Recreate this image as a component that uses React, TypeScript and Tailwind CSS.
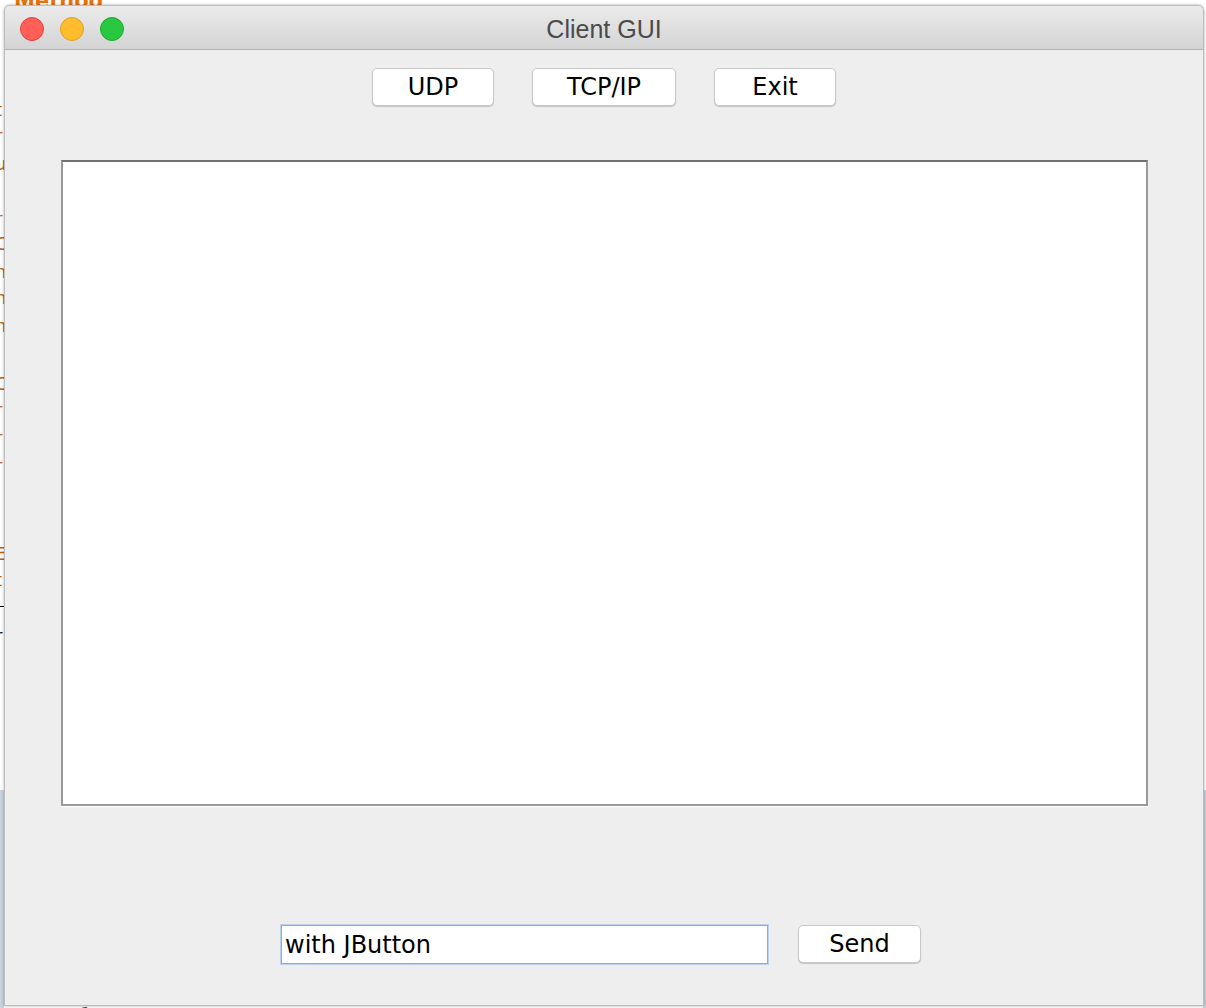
import React from "react"

const behindLines = [
  { top: 96, ch: "t", c: "text-[#c65d07]" },
  { top: 122, ch: "r", c: "text-[#c65d07]" },
  { top: 150, ch: "u", c: "text-[#c65d07]" },
  { top: 205, ch: "r", c: "text-[#c65d07]" },
  { top: 230, ch: "C", c: "text-[#c65d07]" },
  { top: 258, ch: "n", c: "text-[#c65d07]" },
  { top: 284, ch: "n", c: "text-[#c65d07]" },
  { top: 312, ch: "n", c: "text-[#c65d07]" },
  { top: 370, ch: "C", c: "text-[#c65d07]" },
  { top: 396, ch: "r", c: "text-[#c65d07]" },
  { top: 424, ch: "r", c: "text-[#c65d07]" },
  { top: 452, ch: "r", c: "text-[#c65d07]" },
  { top: 540, ch: "E", c: "text-[#c65d07]" },
  { top: 566, ch: "t", c: "text-[#c65d07]" },
  { top: 622, ch: "r", c: "text-black" },
]

function MacButton({ label, w }: { label: string; w: string }) {
  return (
    <button
      className={`${w} h-[38px] rounded-[5px] bg-white border border-[#c8c8c8] shadow-[0_1px_1px_rgba(0,0,0,0.18)] text-[24px] text-black leading-none flex items-center justify-center`}
      style={{ fontFamily: '"DejaVu Sans", sans-serif' }}
    >
      {label}
    </button>
  )
}

export default function App() {
  return (
    <div className="relative w-[1206px] h-[1008px] bg-white overflow-hidden" style={{ fontFamily: '"DejaVu Sans", sans-serif' }}>
      {/* desktop content behind the window */}
      <div className="absolute left-[14px] top-[-14px] text-[21px] font-bold text-[#e8730c]">Method</div>
      {behindLines.map((l) => (
        <div key={l.top} className={`absolute left-[-5px] text-[18px] ${l.c}`} style={{ top: l.top }}>
          {l.ch}
        </div>
      ))}
      <div className="absolute left-0 top-[606px] w-[4px] h-[1px] bg-black" />
      <div className="absolute left-0 top-[790px] w-[4px] h-[220px] bg-[#c9d3de]" />
      <div className="absolute right-0 top-[790px] w-[3px] h-[220px] bg-[#c9d3de]" />
      <div className="absolute left-[58px] top-[1000px] text-[18px] text-[#1f5f5a]">oo1oo</div>

      {/* window */}
      <div className="absolute left-[4px] top-[5px] w-[1200px] h-[1001px] flex flex-col rounded-t-[6px] overflow-hidden border border-[#bdbdbd] bg-[#eeeeee] shadow-[0_0_3px_rgba(0,0,0,0.35)]">
        <div className="relative h-[44px] shrink-0 bg-gradient-to-b from-[#ebebeb] to-[#d4d4d4] border-b border-[#b1b1b1] flex items-center">
          <div className="flex gap-[16px] pl-[15px] pt-[2px]">
            <span className="w-[24px] h-[24px] rounded-full bg-[#ff5f57] border border-[#e0443e]" />
            <span className="w-[24px] h-[24px] rounded-full bg-[#ffbd2e] border border-[#dea123]" />
            <span className="w-[24px] h-[24px] rounded-full bg-[#28c940] border border-[#1aab29]" />
          </div>
          <div
            className="absolute inset-0 pt-[4px] flex items-center justify-center text-[25px] text-[#4a4a4a]"
            style={{ fontFamily: '"Liberation Sans", Arial, sans-serif' }}
          >
            Client GUI
          </div>
        </div>

        <div className="flex-1 flex flex-col">
          <div className="flex justify-center gap-[38px] pt-[18px]">
            <MacButton label="UDP" w="w-[122px]" />
            <MacButton label="TCP/IP" w="w-[144px]" />
            <MacButton label="Exit" w="w-[122px]" />
          </div>

          <div className="pl-[56px] pt-[54px]">
            <div className="w-[1087px] h-[646px] bg-white border-2 border-[#999999] border-t-[#707070] shadow-[0_1px_0_#ffffff]" />
          </div>

          <div className="flex items-center pl-[276px] pt-[119px] gap-[30px]">
            <div className="w-[487px] h-[39px] bg-white border border-[#7eaef0] shadow-[0_0_0_1px_rgba(126,174,240,0.45)] flex items-center pl-[3px] text-[24px] text-black">
              with JButton
            </div>
            <div className="-mt-[2px]">
              <MacButton label="Send" w="w-[123px]" />
            </div>
          </div>
        </div>
      </div>
    </div>
  )
}
